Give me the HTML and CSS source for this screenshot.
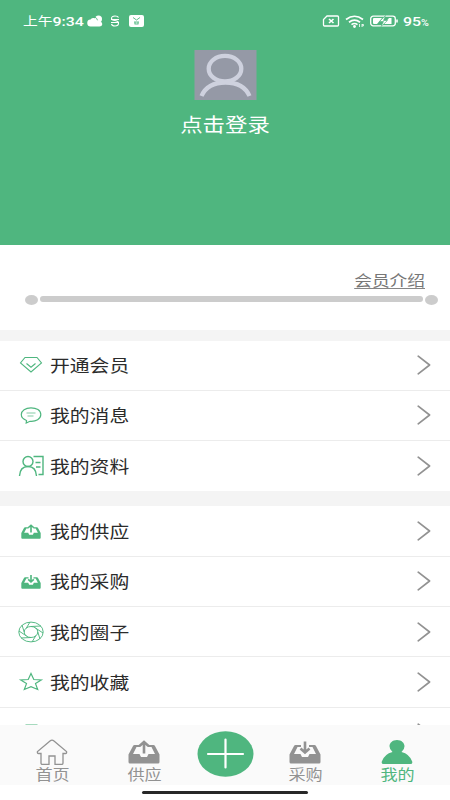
FILE: index.html
```html
<!DOCTYPE html>
<html lang="zh-CN">
<head>
<meta charset="utf-8">
<title>我的</title>
<link rel="stylesheet" href="styles.css">
</head>
<body>
<svg class="defs" width="0" height="0">
  <symbol id="chevron" viewBox="0 0 14 20"><path d="M1.2 1.2 12.6 10 1.2 18.8" fill="none" stroke="#929292" stroke-width="1.7" stroke-linecap="round" stroke-linejoin="round"/></symbol>
  <symbol id="tray-up" viewBox="0 0 32 24"><path fill="currentColor" fill-rule="evenodd" d="M6.5 5H12V7H8.5L5 14h6.5l1.5 3h6l1.5-3H27l-3.500-7H20V5h5.500Q26.500 5 27 6l4.500 8.500V22q0 1.500-1.500 1.500H2Q.5 23.500.5 22V14.500L5 6Q5.500 5 6.500 5Z"/><path d="M16 13.500V2M11.500 6 16 2l4.500 4" fill="none" stroke="currentColor" stroke-width="2.600"/></symbol>
  <symbol id="tray-down" viewBox="0 0 32 24"><path fill="currentColor" fill-rule="evenodd" d="M6.5 5H12V7H8.5L5 14h6.5l1.5 3h6l1.5-3H27l-3.500-7H20V5h5.500Q26.500 5 27 6l4.500 8.500V22q0 1.500-1.500 1.500H2Q.5 23.500.5 22V14.500L5 6Q5.500 5 6.500 5Z"/><path d="M16 1.500V12.500M11.500 8.500 16 12.500l4.500-4" fill="none" stroke="currentColor" stroke-width="2.600"/></symbol>
</svg>
<div class="app">
  <main class="content">
    <header class="hero">
      <div class="status">
        <span class="clock"><span class="wide">上午<b>9:34</b></span></span>
        <svg class="cloud" width="16" height="12" viewBox="0 0 16 12"><circle cx="11.500" cy="4" r="3.500" fill="#fff"/><path d="M4 11.500A3.500 3.500 0 0 1 3.500 4.500 4 4 0 0 1 10 5q1 2 3 1.500 2.500.5 2.300 2.800Q15 11.500 12.500 11.500Z" fill="#fff"/><path d="M8 2.200Q10 3 10.500 5.300" fill="none" stroke="#4fb67f" stroke-width=".9"/></svg>
        <svg class="sogou" width="10" height="12" viewBox="0 0 10 12"><path d="M8.500 2.500Q8 1 5 1 1.500 1 1.500 3.400 1.500 5 5 5.500q3.500.5 3.500 2.800Q8.500 11 5 11 2 11 1.500 9M1 4.500h8M1 7.500h8" fill="none" stroke="#fff" stroke-width="1.100"/></svg>
        <svg class="mail" width="15" height="12" viewBox="0 0 15 12"><rect width="15" height="12" rx="2" fill="#fff"/><path d="M4 2.500 7.500 5 11 2.500M5 7h5M5.500 9h4M6 7v2M9 7v2" fill="none" stroke="#4fb67f" stroke-width=".9"/></svg>
        <svg class="sim" width="18" height="12" viewBox="0 0 18 12"><path d="M5 1H15.500Q16.500 1 16.500 2v8q0 1-1 1H2.500q-1 0-1-1V4.500Z" fill="none" stroke="#fff" stroke-width="1.300"/><path d="M7 4l4.500 4M11.500 4 7 8" stroke="#fff" stroke-width="1.600"/></svg>
        <svg class="wifi" width="20" height="13" viewBox="0 0 20 13"><path d="M1 4.500Q9.500-2 18 4.500M4 7.200Q9.500 3 15 7.200M6.500 9.600Q9.500 7.400 12.500 9.600" fill="none" stroke="#fff" stroke-width="1.700"/><circle cx="9.500" cy="11.500" r="1.400" fill="#fff"/><path d="M14.500 9v3M17 9v3M17 9.500h1.500v1.300H17" fill="none" stroke="#fff" stroke-width=".8"/></svg>
        <svg class="battery" width="29" height="12" viewBox="0 0 29 12"><rect x=".7" y="1.200" width="24.600" height="9.600" rx="2.500" fill="none" stroke="#fff" stroke-width="1.300"/><path d="M27 4.500v3" stroke="#fff" stroke-width="1.600"/><path d="M4 3H12L7 9H4Q3 9 3 8V4Q3 3 4 3ZM19 3h2.500v6H14Z" fill="#fff"/><path d="M15.500.5 9.500 6.500h4L11 11.500 17.500 5.500h-4Z" fill="#fff" stroke="#4fb67f" stroke-width=".6"/></svg>
        <span class="charge"><span class="wide">95<small>%</small></span></span>
      </div>
      <svg class="avatar" viewBox="0 0 62 50"><rect width="62" height="50" fill="#9599a6"/><ellipse cx="30.500" cy="18.700" rx="16.300" ry="12.800" fill="none" stroke="#ced1de" stroke-width="4.300"/><path d="M7 46Q13 32.500 31 32.500T55 46" fill="none" stroke="#ced1de" stroke-width="4.300"/></svg>
      <div class="login"><span class="wide">点击登录</span></div>
    </header>
    <section class="member">
      <div class="intro"><span class="wide">会员介绍</span></div>
      <div class="progress"><i class="dot"></i><i class="bar"></i><i class="dot"></i></div>
    </section>
    <section class="group">
      <div class="row"><svg class="icon" viewBox="0 0 26 22"><path d="M7 3.500H19L23.500 9 13 18 2.500 9ZM8.500 9.500 13 13.200l4.500-3.700" fill="none" stroke="currentColor" stroke-width="1.100"/></svg><span class="wide label">开通会员</span><svg class="chevron"><use href="#chevron"/></svg></div>
      <div class="row"><svg class="icon" viewBox="0 0 26 22"><path d="M8.500 16.500 8.200 19 12 17.300C18 17.800 22.800 15 22.800 10.600S18.500 3.800 13 3.800 3.300 6.500 3.300 10.600q0 4 5.200 5.900Z" fill="none" stroke="currentColor" stroke-width="1.200"/><path d="M8.500 9h9M9.500 12h6" stroke="currentColor" stroke-width=".7"/></svg><span class="wide label">我的消息</span><svg class="chevron"><use href="#chevron"/></svg></div>
      <div class="row"><svg class="icon" viewBox="0 0 26 22"><ellipse cx="10" cy="6.500" rx="5" ry="5" fill="none" stroke="currentColor" stroke-width="1.400"/><path d="M1.500 21Q2 11.500 10 11.500T18.500 21M15.500 1.500h9.500v18H20.500M17.500 7.500h5M18 12h4.500" fill="none" stroke="currentColor" stroke-width="1.400"/></svg><span class="wide label">我的资料</span><svg class="chevron"><use href="#chevron"/></svg></div>
    </section>
    <section class="group">
      <div class="row"><svg class="icon tray"><use href="#tray-up"/></svg><span class="wide label">我的供应</span><svg class="chevron"><use href="#chevron"/></svg></div>
      <div class="row"><svg class="icon tray"><use href="#tray-down"/></svg><span class="wide label">我的采购</span><svg class="chevron"><use href="#chevron"/></svg></div>
      <div class="row"><svg class="icon" viewBox="0 0 26 22"><g fill="none" stroke="currentColor" stroke-width=".95"><ellipse cx="13" cy="11" rx="12.200" ry="9.900"/><ellipse cx="13" cy="11" rx="6.800" ry="5.500"/><path d="M13 5.500 23 5M17.500 7 25 12M19.800 11 22 18M17.800 14.700 14 21M13 16.500 3 17M8.500 15 1 10M6.200 11 4 4M8.200 7.300 12 1"/></g></svg><span class="wide label">我的圈子</span><svg class="chevron"><use href="#chevron"/></svg></div>
      <div class="row"><svg class="icon" viewBox="0 0 26 22"><path d="M13 2.500 15.800 8.500 23.300 8.900 17.500 12.600 19.700 18.500 13 15.700 6.300 18.500 8.500 12.600 2.700 8.900 10.200 8.500Z" fill="none" stroke="currentColor" stroke-width="1.200"/></svg><span class="wide label">我的收藏</span><svg class="chevron"><use href="#chevron"/></svg></div>
      <div class="row"><svg class="icon" viewBox="0 0 26 22"><rect x="7" y="2.500" width="13" height="16" rx="1" fill="currentColor"/></svg><span class="wide label">我的名片</span><svg class="chevron"><use href="#chevron"/></svg></div>
    </section>
  </main>
  <nav class="tabs">
    <div class="tab"><svg viewBox="0 0 32 26"><path d="M16 1.200Q17 1.200 18 2L30.500 12.500Q31 14.500 29.500 14.500H27V24q0 1.500-1.500 1.500H19V17H13v8.500H6.500Q5 25.500 5 24V14.500H2.500Q1 14.500 1.500 12.500L14 2Q15 1.200 16 1.200Z" fill="none" stroke="currentColor" stroke-width="1.300"/></svg><span class="wide">首页</span></div>
    <div class="tab"><svg><use href="#tray-up"/></svg><span class="wide">供应</span></div>
    <div class="add"><svg viewBox="0 0 56 46"><ellipse cx="28" cy="23" rx="28" ry="22.700" fill="#4fb67f"/><path d="M10.500 23h35M28 8.500v28" stroke="#fff" stroke-width="2.200" stroke-linecap="round"/></svg></div>
    <div class="tab"><svg><use href="#tray-down"/></svg><span class="wide">采购</span></div>
    <div class="tab active"><svg viewBox="0 0 32 26"><path fill="currentColor" d="M16 1C20.500 1 23.500 4 23.500 7.300Q23.500 10.500 20.500 13 28.500 15 31.200 22.500 31.800 25 29.500 25H2.500Q.2 25 .8 22.500 3.500 15 11.500 13 8.500 10.500 8.500 7.300C8.500 4 11.500 1 16 1Z"/></svg><span class="wide">我的</span></div>
  </nav>
  <footer class="home"><i></i></footer>
</div>
</body>
</html>
```
FILE: styles.css
```css
* { box-sizing: border-box; }
body { margin: 0; background: #fff; font-family: "Noto Sans CJK SC", sans-serif; }
.defs { position: absolute; }
.app { width: 450px; height: 800px; display: flex; flex-direction: column; overflow: hidden; }
.content { height: 725px; flex: none; overflow: hidden; background: #f4f4f4; }
.wide { display: inline-block; transform: scaleX(1.18); white-space: nowrap; }
svg { flex: none; display: block; }

.hero { height: 245px; background: #4fb67f; color: #fff; display: flex; flex-direction: column; align-items: center; }
.status { width: 450px; height: 42px; padding-left: 23px; display: flex; align-items: center; font-size: 12.5px; }
.status .wide { transform-origin: left; }
.clock { width: 64px; }
.clock .wide, .charge .wide { position: relative; top: -1px; }
.clock b, .charge { font-family: Roboto, sans-serif; font-weight: 500; font-size: 13.5px; }
.charge .wide { top: 0; }
.charge small { font-size: 9px; }
.sogou { margin-left: 7px; }
.mail { margin-left: 9px; }
.sim { margin-left: 178px; }
.wifi { margin-left: 5px; }
.battery { margin-left: 5px; }
.charge { margin-left: 4px; }
.avatar { width: 63px; height: 50px; margin-top: 8px; }
.login { font-size: 19px; line-height: 28px; margin-top: 10px; }

.member { height: 86px; background: #fff; padding: 23px 12px 0 25px; border-bottom: 1px solid #f4f4f4; }
.intro { text-align: right; font-size: 15px; line-height: 24px; height: 24px; padding-right: 13px; color: #777; }
.intro .wide { transform-origin: right; border-bottom: 1px solid #858585; line-height: 17px; }
.progress { display: flex; align-items: center; gap: 2px; height: 11px; margin-top: 2px; }
.dot { width: 13px; height: 10px; border-radius: 50%; background: #ccc; }
.bar { flex: 1; height: 6px; border-radius: 3px; background: #ccc; margin-bottom: 1px; }

.group { margin-top: 9.500px; }
.group + .group { margin-top: 15px; }
.row { height: 50.300px; display: flex; align-items: center; padding: 0 19px 0 18px; background: #fff; border-bottom: 1px solid #ececec; }
.group .row:last-child { border-bottom: 0; }
.icon { width: 26px; height: 22px; color: #4fb67f; }
.icon.tray { height: 15px; width: 20px; margin: 0 3px; }
.label { transform-origin: left; margin-left: 5.500px; font-size: 16.800px; line-height: 24px; color: #2b2b2b; }
.chevron { width: 14px; height: 20px; margin-left: auto; }

.tabs { height: 60px; flex: none; display: grid; grid-template-columns: 92px 92px 70px 90px 94px; padding-left: 6px; background: #fafafa; }
.tab { display: flex; flex-direction: column; align-items: center; padding-top: 14px; color: #929292; font-size: 14.500px; line-height: 18px; }
.tab svg { width: 32px; height: 26px; }
.tab.active { color: #4fb67f; }
.add { display: flex; justify-content: center; padding-top: 6px; }
.add svg { width: 57px; height: 46px; }
.home { height: 15px; display: flex; justify-content: center; padding-top: 6px; }
.home i { width: 166px; height: 3px; border-radius: 2px; background: #282828; }
```
